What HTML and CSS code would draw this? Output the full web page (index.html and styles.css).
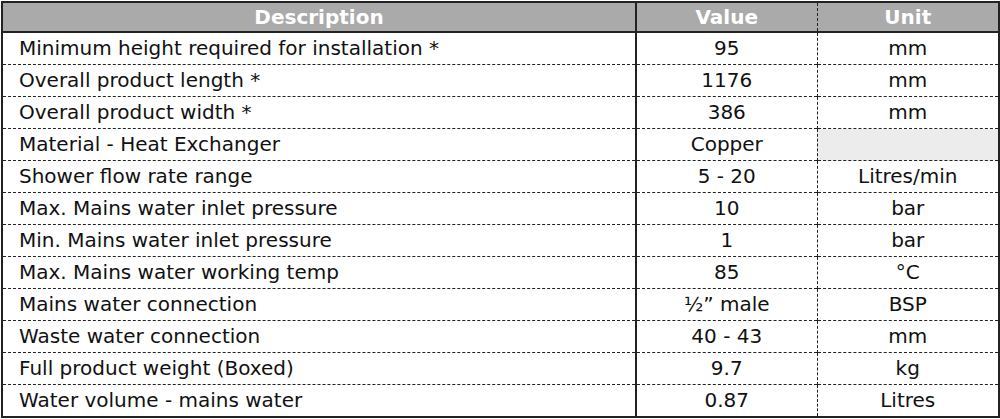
FILE: index.html
```html
<!DOCTYPE html>
<html>
<head>
<meta charset="utf-8">
<link rel="stylesheet" href="styles.css">
</head>
<body>
<table class="spec">
  <colgroup>
    <col class="c-desc">
    <col class="c-val">
    <col class="c-unit">
  </colgroup>
  <thead>
    <tr><th class="desc">Description</th><th class="val">Value</th><th class="unit">Unit</th></tr>
  </thead>
  <tbody>
    <tr><td class="desc">Minimum height required for installation *</td><td class="val">95</td><td class="unit">mm</td></tr>
    <tr><td class="desc">Overall product length *</td><td class="val">1176</td><td class="unit">mm</td></tr>
    <tr><td class="desc">Overall product width *</td><td class="val">386</td><td class="unit">mm</td></tr>
    <tr><td class="desc">Material - Heat Exchanger</td><td class="val">Copper</td><td class="unit empty"></td></tr>
    <tr><td class="desc">Shower flow rate range</td><td class="val">5 - 20</td><td class="unit">Litres/min</td></tr>
    <tr><td class="desc">Max. Mains water inlet pressure</td><td class="val">10</td><td class="unit">bar</td></tr>
    <tr><td class="desc">Min. Mains water inlet pressure</td><td class="val">1</td><td class="unit">bar</td></tr>
    <tr><td class="desc">Max. Mains water working temp</td><td class="val">85</td><td class="unit">°C</td></tr>
    <tr><td class="desc">Mains water connection</td><td class="val">½” male</td><td class="unit">BSP</td></tr>
    <tr><td class="desc">Waste water connection</td><td class="val">40 - 43</td><td class="unit">mm</td></tr>
    <tr><td class="desc">Full product weight (Boxed)</td><td class="val">9.7</td><td class="unit">kg</td></tr>
    <tr><td class="desc">Water volume - mains water</td><td class="val">0.87</td><td class="unit">Litres</td></tr>
  </tbody>
</table>
</body>
</html>
```
FILE: styles.css
```css
html, body {
  margin: 0;
  padding: 0;
  background: #ffffff;
}
body {
  padding: 1px 0 0 1px;
  font-family: "DejaVu Sans", Verdana, sans-serif;
  color: #111111;
}
.spec {
  border-collapse: collapse;
  width: 997px;
  table-layout: fixed;
  border: 2px solid #222222;
  font-size: 20px;
}
.c-desc { width: 634px; }
.c-val { width: 181px; }
.c-unit { width: 182px; }
.spec th {
  background: #aaaaaa;
  color: #ffffff;
  font-weight: bold;
  height: 28px;
  padding: 0;
  text-align: center;
  border-bottom: 2px solid #222222;
  line-height: 28px;
}
.spec td {
  height: 31px;
  padding: 0;
  line-height: 31px;
  border-top: 1px dashed #222222;
  white-space: nowrap;
}
.spec tbody tr:first-child td { border-top: none; }
.spec td.desc { padding-left: 16px; text-align: left; }
.spec td.val, .spec td.unit { text-align: center; }
.spec .desc { border-right: 2px solid #222222; }
.spec .val { border-right: 1px dashed #222222; }
.spec td.empty { background: #ececec; }
```
